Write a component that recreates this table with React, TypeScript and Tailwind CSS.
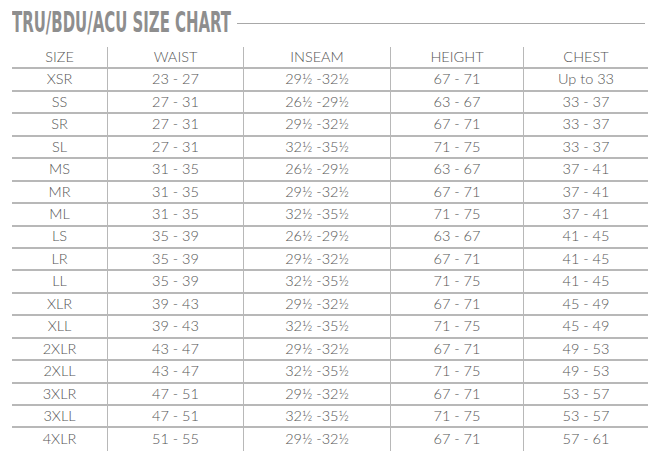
import React from "react";

const rows: string[][] = [
  ["XSR", "23 - 27", "29½ -32½", "67 - 71", "Up to 33"],
  ["SS", "27 - 31", "26½ -29½", "63 - 67", "33 - 37"],
  ["SR", "27 - 31", "29½ -32½", "67 - 71", "33 - 37"],
  ["SL", "27 - 31", "32½ -35½", "71 - 75", "33 - 37"],
  ["MS", "31 - 35", "26½ -29½", "63 - 67", "37 - 41"],
  ["MR", "31 - 35", "29½ -32½", "67 - 71", "37 - 41"],
  ["ML", "31 - 35", "32½ -35½", "71 - 75", "37 - 41"],
  ["LS", "35 - 39", "26½ -29½", "63 - 67", "41 - 45"],
  ["LR", "35 - 39", "29½ -32½", "67 - 71", "41 - 45"],
  ["LL", "35 - 39", "32½ -35½", "71 - 75", "41 - 45"],
  ["XLR", "39 - 43", "29½ -32½", "67 - 71", "45 - 49"],
  ["XLL", "39 - 43", "32½ -35½", "71 - 75", "45 - 49"],
  ["2XLR", "43 - 47", "29½ -32½", "67 - 71", "49 - 53"],
  ["2XLL", "43 - 47", "32½ -35½", "71 - 75", "49 - 53"],
  ["3XLR", "47 - 51", "29½ -32½", "67 - 71", "53 - 57"],
  ["3XLL", "47 - 51", "32½ -35½", "71 - 75", "53 - 57"],
  ["4XLR", "51 - 55", "29½ -32½", "67 - 71", "57 - 61"],
];

const header = ["SIZE", "WAIST", "INSEAM", "HEIGHT", "CHEST"];

function Row({ cells, last }: { cells: string[]; last?: boolean }) {
  return (
    <div
      className={
        "grid grid-cols-[95px_136px_147px_133px_125px] h-[22.44px] box-border " +
        (last ? "" : "border-b-2 border-[#b8b8b8]")
      }
    >
      {cells.map((c, i) => (
        <div
          key={i}
          className={
            "flex items-center justify-center leading-none " +
            (i > 0 ? "border-l border-[#b8b8b8]" : "")
          }
        >
          {c}
        </div>
      ))}
    </div>
  );
}

export default function App() {
  return (
    <div className="w-[672px] h-[469px] bg-white relative overflow-hidden">
      <div className="flex items-center pl-[12px] pr-[27px] pt-[12px] h-[34px]">
        <div className="w-[220px] shrink-0 overflow-visible whitespace-nowrap">
          <span
            className="inline-block origin-left scale-x-[0.593] text-[28px] leading-none font-bold text-[#8e8e8e]"
            style={{ fontFamily: '"Liberation Sans Narrow", "DejaVu Sans Condensed", "Liberation Sans", sans-serif' }}
          >
            TRU/BDU/ACU SIZE CHART
          </span>
        </div>
        <div className="flex-1 ml-[5px] h-px bg-[#a8a8a8]" />
      </div>
      <div
        className="mt-[13px] ml-[12px] w-[636px] text-[14.5px] font-light text-[#555555]"
        style={{ fontFamily: 'Lato, "Open Sans", sans-serif' }}
      >
        <Row cells={header} />
        {rows.map((r, i) => (
          <Row key={i} cells={r} last={i === rows.length - 1} />
        ))}
      </div>
    </div>
  );
}
